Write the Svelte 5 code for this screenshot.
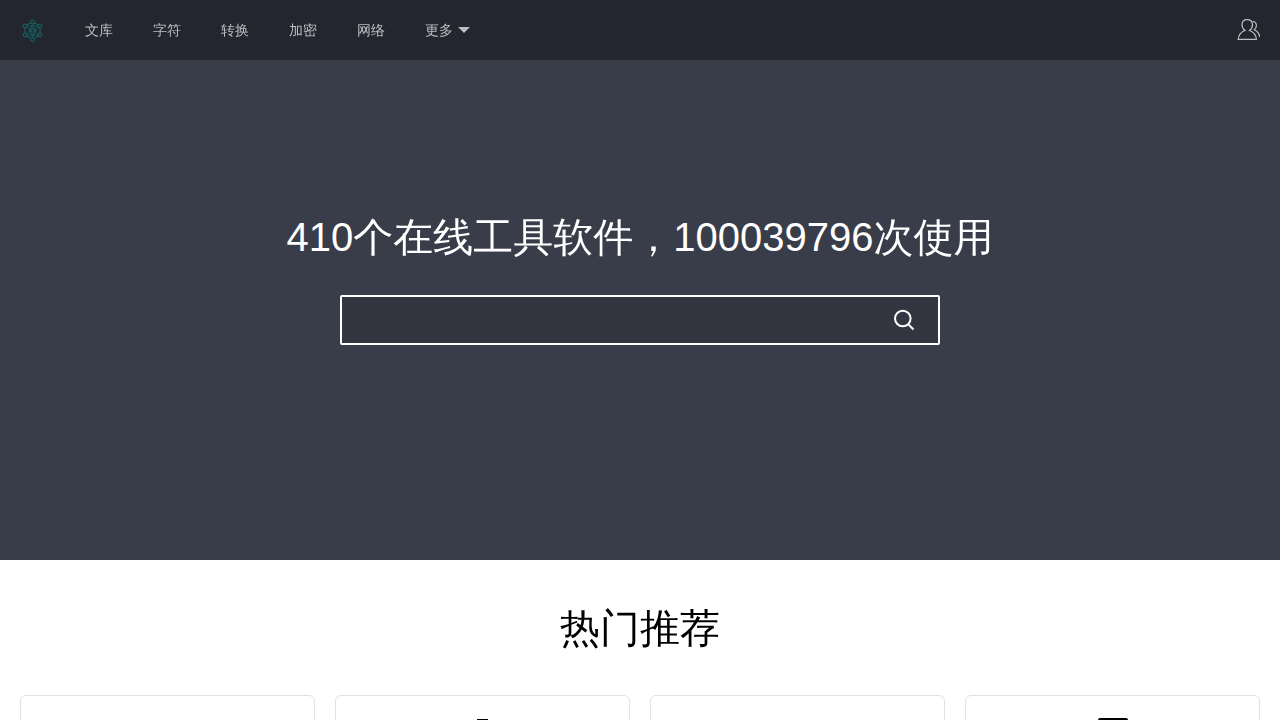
<script lang="ts">
  interface Tool {
    id: string;
    label: string;
  }

  const links = ['文库', '字符', '转换', '加密', '网络'];

  const tools: Tool[] = [
    { id: 'blank', label: '工具' },
    { id: 'flask', label: '工具' },
    { id: 'blank', label: '工具' },
    { id: 'screen', label: '工具' }
  ];

  // Outer nodes of the logo, clockwise from the top
  const nodes = [
    [12.5, 3],
    [20, 7],
    [20, 16],
    [12.5, 20.5],
    [5, 16],
    [5, 7]
  ];

  let keyword = $state('');

  function search(event: SubmitEvent) {
    event.preventDefault();
    keyword = keyword.trim();
  }
</script>

<header>
  <a class="logo" href="/" aria-label="首页">
    <svg width="24" height="24" viewBox="0 0 24 24" fill="none" stroke="currentColor">
      <path d="M12.500 3L20 7v9l-7.500 4.500L5 16V7z" stroke-width="1" />
      <path d="M12.500 5L18 16H7zM12.500 18L7 7h11z" stroke-width="0.6" />
      <path d="M12.500 7.500l3 4-3 5-3-5z" stroke-width="0.8" />
      {#each nodes as [cx, cy]}
        <circle {cx} {cy} r="1.9" fill="#23262e" />
      {/each}
      <circle cx="12.5" cy="11.5" r="1.5" />
    </svg>
  </a>
  <nav>
    {#each links as link}
      <a href="/">{link}</a>
    {/each}
    <button class="more" type="button">更多<span class="caret"></span></button>
  </nav>
  <a class="user" href="/" aria-label="用户">
    <svg width="24" height="24" viewBox="-1 0 24 24" fill="none" stroke="currentColor" stroke-width="1.2">
      <path d="M8 12.5C6 11 5 9 5 6.700C5 3.500 7.200 1.600 10.200 1.600S15.500 3.500 15.500 6.700C15.500 9 14.500 11 12.500 12.500C16.500 14 19 17 19.400 21.400H1.200C1.600 17 4 14 8 12.500z" />
      <path d="M15.500 3.500C18 3.600 19.400 5.200 19.400 7.600C19.400 9.300 18.600 10.700 17.300 11.700C20.500 13.200 22.300 15.600 22.700 19" />
    </svg>
  </a>
</header>

<main>
  <section class="banner">
    <h1>410个在线工具软件，100039796次使用</h1>
    <form class="search" onsubmit={search}>
      <input type="text" aria-label="搜索工具" bind:value={keyword} />
      <button type="submit" aria-label="搜索">
        <svg width="22" height="22" viewBox="0 0 22 22" fill="none" stroke="currentColor" stroke-width="2">
          <circle cx="9.800" cy="9.500" r="7.800" />
          <path d="M15 15l5.500 5.500" />
        </svg>
      </button>
    </form>
  </section>

  <section class="hot">
    <h2>热门推荐</h2>
    <div class="cards">
      {#each tools as tool}
        <a class="card" href="/" aria-label={tool.label}>
          <svg width="64" height="64" viewBox="0 0 64 64" fill="none" stroke="#000" stroke-width="2">
            {#if tool.id === 'flask'}
              <path d="M26 4h11M29 4v20L12 56h40L35 24V4" />
            {:else if tool.id === 'screen'}
              <rect x="18" y="3" width="28" height="56" rx="1" fill="#777" />
            {/if}
          </svg>
        </a>
      {/each}
    </div>
  </section>
</main>

<style>
  :global(body) {
    margin: 0;
    background: #fff;
    color: #000;
    font-family: 'Liberation Sans', 'WenQuanYi Zen Hei', 'Noto Sans CJK SC', sans-serif;
    font-size: 14px;
    line-height: 24px;
  }

  a {
    color: inherit;
    text-decoration: none;
  }

  button {
    padding: 0;
    border: 0;
    background: none;
    color: inherit;
    font: inherit;
    cursor: pointer;
  }

  svg {
    display: block;
  }

  header {
    display: flex;
    align-items: center;
    height: 60px;
    padding: 0 20px;
    background: #23262e;
    color: #bdbec0;
  }

  .logo {
    margin-right: 21px;
    padding-top: 2px;
    color: #126b69;
  }

  nav {
    display: flex;
    flex: 1;
  }

  nav a,
  .more {
    padding: 0 20px;
    line-height: 60px;
  }

  .more {
    display: flex;
    align-items: center;
    gap: 5px;
  }

  .caret {
    border: 6px solid transparent;
    border-top-color: currentColor;
    border-bottom: 0;
  }

  .banner {
    box-sizing: border-box;
    display: flex;
    flex-direction: column;
    align-items: center;
    min-height: 500px;
    padding: 147px 20px 0;
    background: #393d49;
    color: #fff;
  }

  h1,
  h2 {
    margin: 0;
    font-size: 40px;
    font-weight: 400;
    line-height: 60px;
    text-align: center;
  }

  .search {
    display: flex;
    box-sizing: border-box;
    width: 100%;
    max-width: 600px;
    height: 50px;
    margin-top: 28px;
    border: 2px solid #fff;
    border-radius: 2px;
    background: #333541;
  }

  .search input {
    flex: 1;
    min-width: 0;
    padding: 0 20px;
    border: 0;
    outline: none;
    background: none;
    color: #fff;
    font: inherit;
    font-size: 18px;
  }

  .search button {
    padding: 0 23px;
  }

  .hot {
    padding: 38px 20px 40px;
  }

  .cards {
    display: grid;
    grid-template-columns: repeat(4, 1fr);
    gap: 20px;
    margin-top: 37px;
  }

  .card {
    display: flex;
    justify-content: center;
    padding: 20px;
    border: 1px solid #e2e2e2;
    border-radius: 6px;
  }
</style>
